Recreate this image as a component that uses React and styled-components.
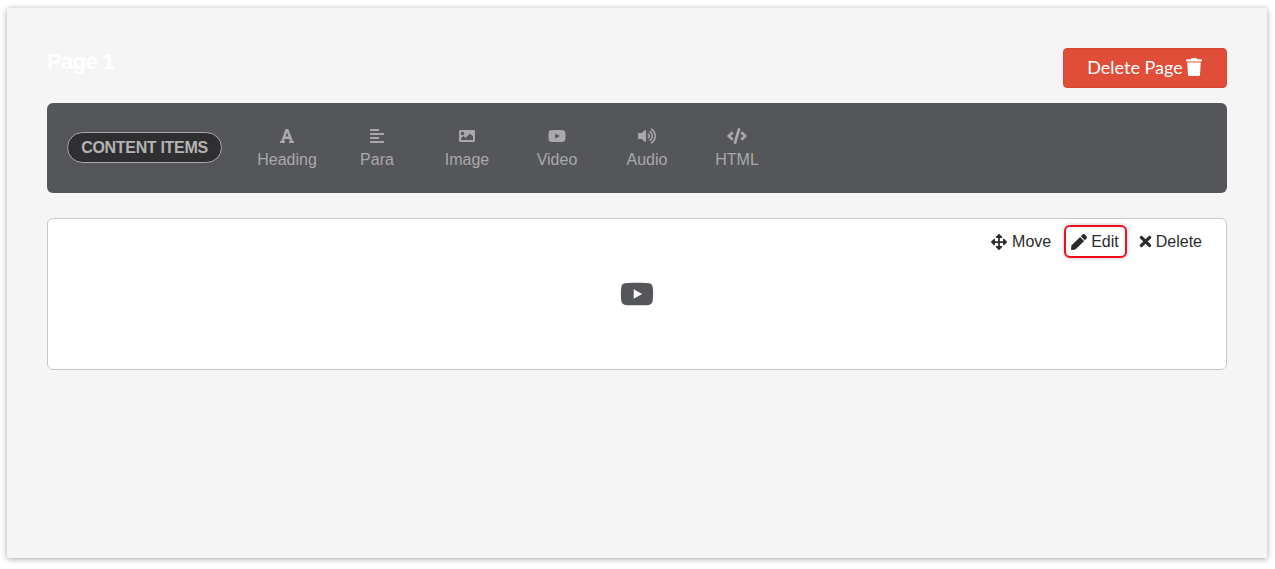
import React from "react";
import styled, { createGlobalStyle } from "styled-components";
import {
  FaFont,
  FaAlignLeft,
  FaImage,
  FaYoutube,
  FaVolumeUp,
  FaCode,
  FaTrash,
  FaArrowsAlt,
  FaPen,
  FaTimes,
} from "react-icons/fa";

const GlobalStyle = createGlobalStyle`
  html, body {
    margin: 0;
    padding: 0;
    background: #ffffff;
  }
  body {
    font-family: "Liberation Sans", Arial, sans-serif;
  }
`;

const Page = styled.div`
  padding: 8px 8px 11px 7px;
  height: 569px;
  box-sizing: border-box;
`;

const Panel = styled.div`
  box-sizing: border-box;
  height: 550px;
  background: #f5f5f5;
  box-shadow: 0 1px 6px rgba(0, 0, 0, 0.35);
  padding: 40px;
`;

const Header = styled.div`
  display: flex;
  justify-content: space-between;
  align-items: flex-start;
  height: 55px;
`;

const Title = styled.h2`
  margin: 0;
  color: #ffffff;
  font-size: 22px;
  font-weight: bold;
  line-height: 28px;
  letter-spacing: -0.65px;
`;

const DeleteButton = styled.button`
  display: flex;
  align-items: center;
  justify-content: center;
  gap: 2px;
  width: 164px;
  height: 40px;
  padding: 0 0 2px;
  background: #e04e39;
  border: 1px solid #dd4431;
  border-radius: 4px;
  color: #ffffff;
  font-family: "Lato", sans-serif;
  font-size: 18px;
`;

const Toolbar = styled.div`
  display: flex;
  align-items: center;
  height: 90px;
  padding-left: 20px;
  background: #55565a;
  border-radius: 6px;
`;

const Pill = styled.div`
  box-sizing: border-box;
  width: 155px;
  height: 31px;
  margin: 0 20px 1px 0;
  display: flex;
  align-items: center;
  justify-content: center;
  background: #2f2f31;
  border: 1px solid #a9a9a9;
  border-radius: 16px;
  color: #b4b4b4;
  font-size: 16px;
  font-weight: bold;
  letter-spacing: -0.32px;
`;

const Tool = styled.div`
  width: 90px;
  display: flex;
  flex-direction: column;
  align-items: center;
  color: #a9a9a9;
  font-size: 16px;
  line-height: 18px;
`;

const ToolIcon = styled.div`
  height: 20px;
  display: flex;
  align-items: center;
  justify-content: center;
  margin: -1px 0 5px;
  font-size: ${(p) => p.$size}px;
`;

const Card = styled.div`
  box-sizing: border-box;
  height: 152px;
  margin-top: 25px;
  padding: 6px 16px 0 0;
  background: #ffffff;
  border: 1px solid #c8c8c8;
  border-radius: 6px;
`;

const Actions = styled.div`
  display: flex;
  justify-content: flex-end;
  align-items: center;
  gap: 4px;
`;

const Action = styled.div`
  box-sizing: border-box;
  height: 33px;
  display: flex;
  align-items: center;
  gap: 4px;
  padding: 0 6px 0 ${(p) => (p.$active ? 5 : 6)}px;
  color: #2b2b2b;
  font-size: 16px;
  border: 2px solid ${(p) => (p.$active ? "#ee0f1a" : "transparent")};
  border-radius: 6px;
  box-shadow: ${(p) => (p.$active ? "0 0 4px rgba(0, 0, 0, 0.25)" : "none")};

  &:first-child {
    gap: 5px;
    margin-right: 1px;
  }
`;

const CloseIcon = styled(FaTimes)`
  margin: 0 -2px;
`;

const Preview = styled.div`
  display: flex;
  justify-content: center;
  color: #55565a;
  font-size: 34px;
  margin: 19px 0 0 16px;
  line-height: 0;
`;

const tools = [
  { label: "Heading", Icon: FaFont, size: 16 },
  { label: "Para", Icon: FaAlignLeft, size: 16 },
  { label: "Image", Icon: FaImage, size: 16 },
  { label: "Video", Icon: FaYoutube, size: 18 },
  { label: "Audio", Icon: FaVolumeUp, size: 18 },
  { label: "HTML", Icon: FaCode, size: 20 },
];

export default function App() {
  return (
    <Page>
      <GlobalStyle />
      <Panel>
        <Header>
          <Title>Page 1</Title>
          <DeleteButton>
            Delete Page <FaTrash size={18} />
          </DeleteButton>
        </Header>
        <Toolbar>
          <Pill>CONTENT ITEMS</Pill>
          {tools.map(({ label, Icon, size }) => (
            <Tool key={label}>
              <ToolIcon $size={size}>
                <Icon />
              </ToolIcon>
              {label}
            </Tool>
          ))}
        </Toolbar>
        <Card>
          <Actions>
            <Action>
              <FaArrowsAlt size={16} /> Move
            </Action>
            <Action $active>
              <FaPen size={16} /> Edit
            </Action>
            <Action>
              <CloseIcon size={17} /> Delete
            </Action>
          </Actions>
          <Preview>
            <FaYoutube />
          </Preview>
        </Card>
      </Panel>
    </Page>
  );
}
